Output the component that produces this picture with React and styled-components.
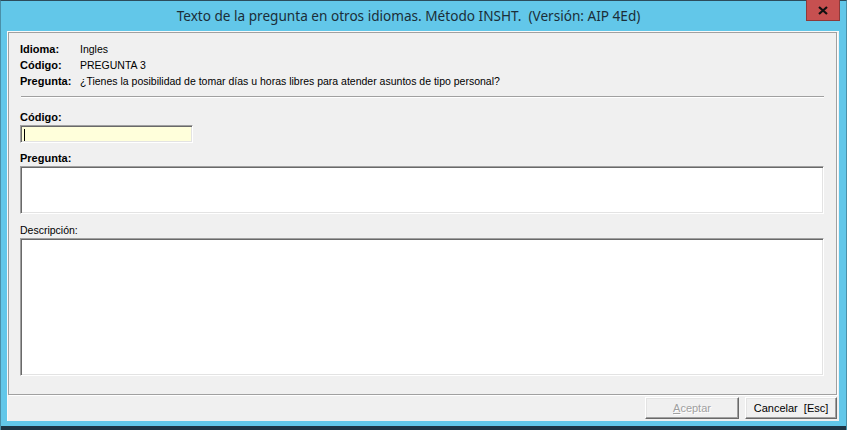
import React from "react";
import styled, { createGlobalStyle } from "styled-components";

const GlobalStyle = createGlobalStyle`
  html, body {
    margin: 0;
    padding: 0;
    width: 847px;
    height: 430px;
    overflow: hidden;
    background: #1d3444;
  }
  * {
    box-sizing: border-box;
  }
`;

const Window = styled.div`
  width: 847px;
  height: 430px;
  display: flex;
  flex-direction: column;
  background: #62c7e9;
  border-top: 1px solid #2c4c5c;
  border-left: 1px solid #4a8fa8;
  border-right: 1px solid #4a8fa8;
  font-family: "Liberation Sans", Arial, sans-serif;
`;

const TitleBar = styled.div`
  height: 30px;
  display: grid;
  grid-template-columns: 10px 1fr 40px;
  align-items: start;
`;

const Title = styled.div`
  grid-column: 2;
  text-align: center;
  padding: 5px 0 0 0;
  font-family: "Noto Sans", "Liberation Sans", sans-serif;
  font-size: 13.6px;
  color: #1b2e38;
  white-space: pre;
`;

const CloseButton = styled.svg`
  grid-column: 3;
  display: block;
  margin-top: -1px;
`;

const Client = styled.div`
  height: 390px;
  margin: 0 7px 0 6px;
  background: #f0f0f0;
  display: flex;
  flex-direction: column;
  border-top: 1px solid #fafafa;
  border-left: 1px solid #fafafa;
`;

const Panel = styled.div`
  height: 363px;
  margin: 0 2px 0 0;
  border: 1px solid #a0a0a0;
  box-shadow: 1px 1px 0 #ffffff;
  padding: 8px 12px 0 11px;
  display: flex;
  flex-direction: column;
`;

const InfoGrid = styled.div`
  display: grid;
  grid-template-columns: 60px 1fr;
  grid-auto-rows: 16px;
  color: #000;
  align-items: center;
`;

const InfoLabel = styled.div`
  font-size: 11px;
  font-weight: bold;
`;

const InfoValue = styled.div`
  font-size: 10.5px;
  white-space: nowrap;
`;

const Separator = styled.div`
  margin: 7px 0 0 1px;
  height: 2px;
  border-top: 1px solid #a0a0a0;
  border-bottom: 1px solid #ffffff;
`;

const FieldLabel = styled.div`
  font-size: ${(p) => (p.$bold ? "11px" : "10.5px")};
  font-weight: ${(p) => (p.$bold ? "bold" : "normal")};
  color: #000;
  height: 14px;
  line-height: 14px;
  margin-top: ${(p) => p.$top}px;
  margin-bottom: 1px;
`;

const Field = styled.div`
  width: ${(p) => p.$width};
  height: ${(p) => p.$height}px;
  background: ${(p) => p.$bg};
  border-top: 1px solid #a0a0a0;
  border-left: 1px solid #a0a0a0;
  border-bottom: 1px solid #ffffff;
  border-right: 1px solid #ffffff;
  box-shadow: inset 1px 1px 0 #696969, inset -1px -1px 0 #e3e3e3;
  padding: 3px;
  display: flex;
  align-items: flex-start;
`;

const Caret = styled.span`
  display: block;
  width: 1px;
  height: 12px;
  background: #000;
`;

const Footer = styled.div`
  flex: 1;
  display: flex;
  justify-content: flex-end;
  align-items: flex-start;
  gap: 6px;
  padding: 2px 2px 0 0;
`;

const Button = styled.div`
  width: ${(p) => p.$width}px;
  height: 22px;
  background: #f0f0f0;
  border-top: 1px solid #ffffff;
  border-left: 1px solid #ffffff;
  border-bottom: 1px solid #696969;
  border-right: 1px solid #696969;
  box-shadow: inset -1px -1px 0 #a0a0a0, inset 1px 1px 0 #e3e3e3;
  display: flex;
  align-items: center;
  justify-content: center;
  font-size: 11px;
  color: ${(p) => (p.$disabled ? "#a0a0a0" : "#000")};
  ${(p) => p.$disabled && "text-shadow: 1px 1px 0 #ffffff;"}
  white-space: pre;
  u {
    text-decoration: underline;
  }
`;

const Taskbar = styled.div`
  margin-top: auto;
  height: 4px;
  background: #1d3444;
`;

export default function App() {
  return (
    <>
      <GlobalStyle />
      <Window>
        <TitleBar>
          <Title>Texto de la pregunta en otros idiomas. Método INSHT.  (Versión: AIP 4Ed)</Title>
          <CloseButton width="34" height="21" viewBox="0 0 34 21">
            <rect x="0.5" y="-1" width="33" height="21.5" fill="#c75050" stroke="#8d3a3a" />
            <path d="M13 7 L21 14 M21 7 L13 14" stroke="#111" strokeWidth="2.2" />
          </CloseButton>
        </TitleBar>
        <Client>
          <Panel>
            <InfoGrid>
              <InfoLabel>Idioma:</InfoLabel>
              <InfoValue>Ingles</InfoValue>
              <InfoLabel>Código:</InfoLabel>
              <InfoValue>PREGUNTA 3</InfoValue>
              <InfoLabel>Pregunta:</InfoLabel>
              <InfoValue>
                ¿Tienes la posibilidad de tomar días u horas libres para atender asuntos de tipo personal?
              </InfoValue>
            </InfoGrid>
            <Separator />
            <FieldLabel $bold $top={12}>Código:</FieldLabel>
            <Field $width="173px" $height={18} $bg="#ffffdb">
              <Caret />
            </Field>
            <FieldLabel $bold $top={8}>Pregunta:</FieldLabel>
            <Field $width="100%" $height={48} $bg="#ffffff" />
            <FieldLabel $top={9}>Descripción:</FieldLabel>
            <Field $width="100%" $height={138} $bg="#ffffff" />
          </Panel>
          <Footer>
            <Button $width={94} $disabled>
              <span>
                <u>A</u>ceptar
              </span>
            </Button>
            <Button $width={92}>Cancelar  [Esc]</Button>
          </Footer>
        </Client>
        <Taskbar />
      </Window>
    </>
  );
}
